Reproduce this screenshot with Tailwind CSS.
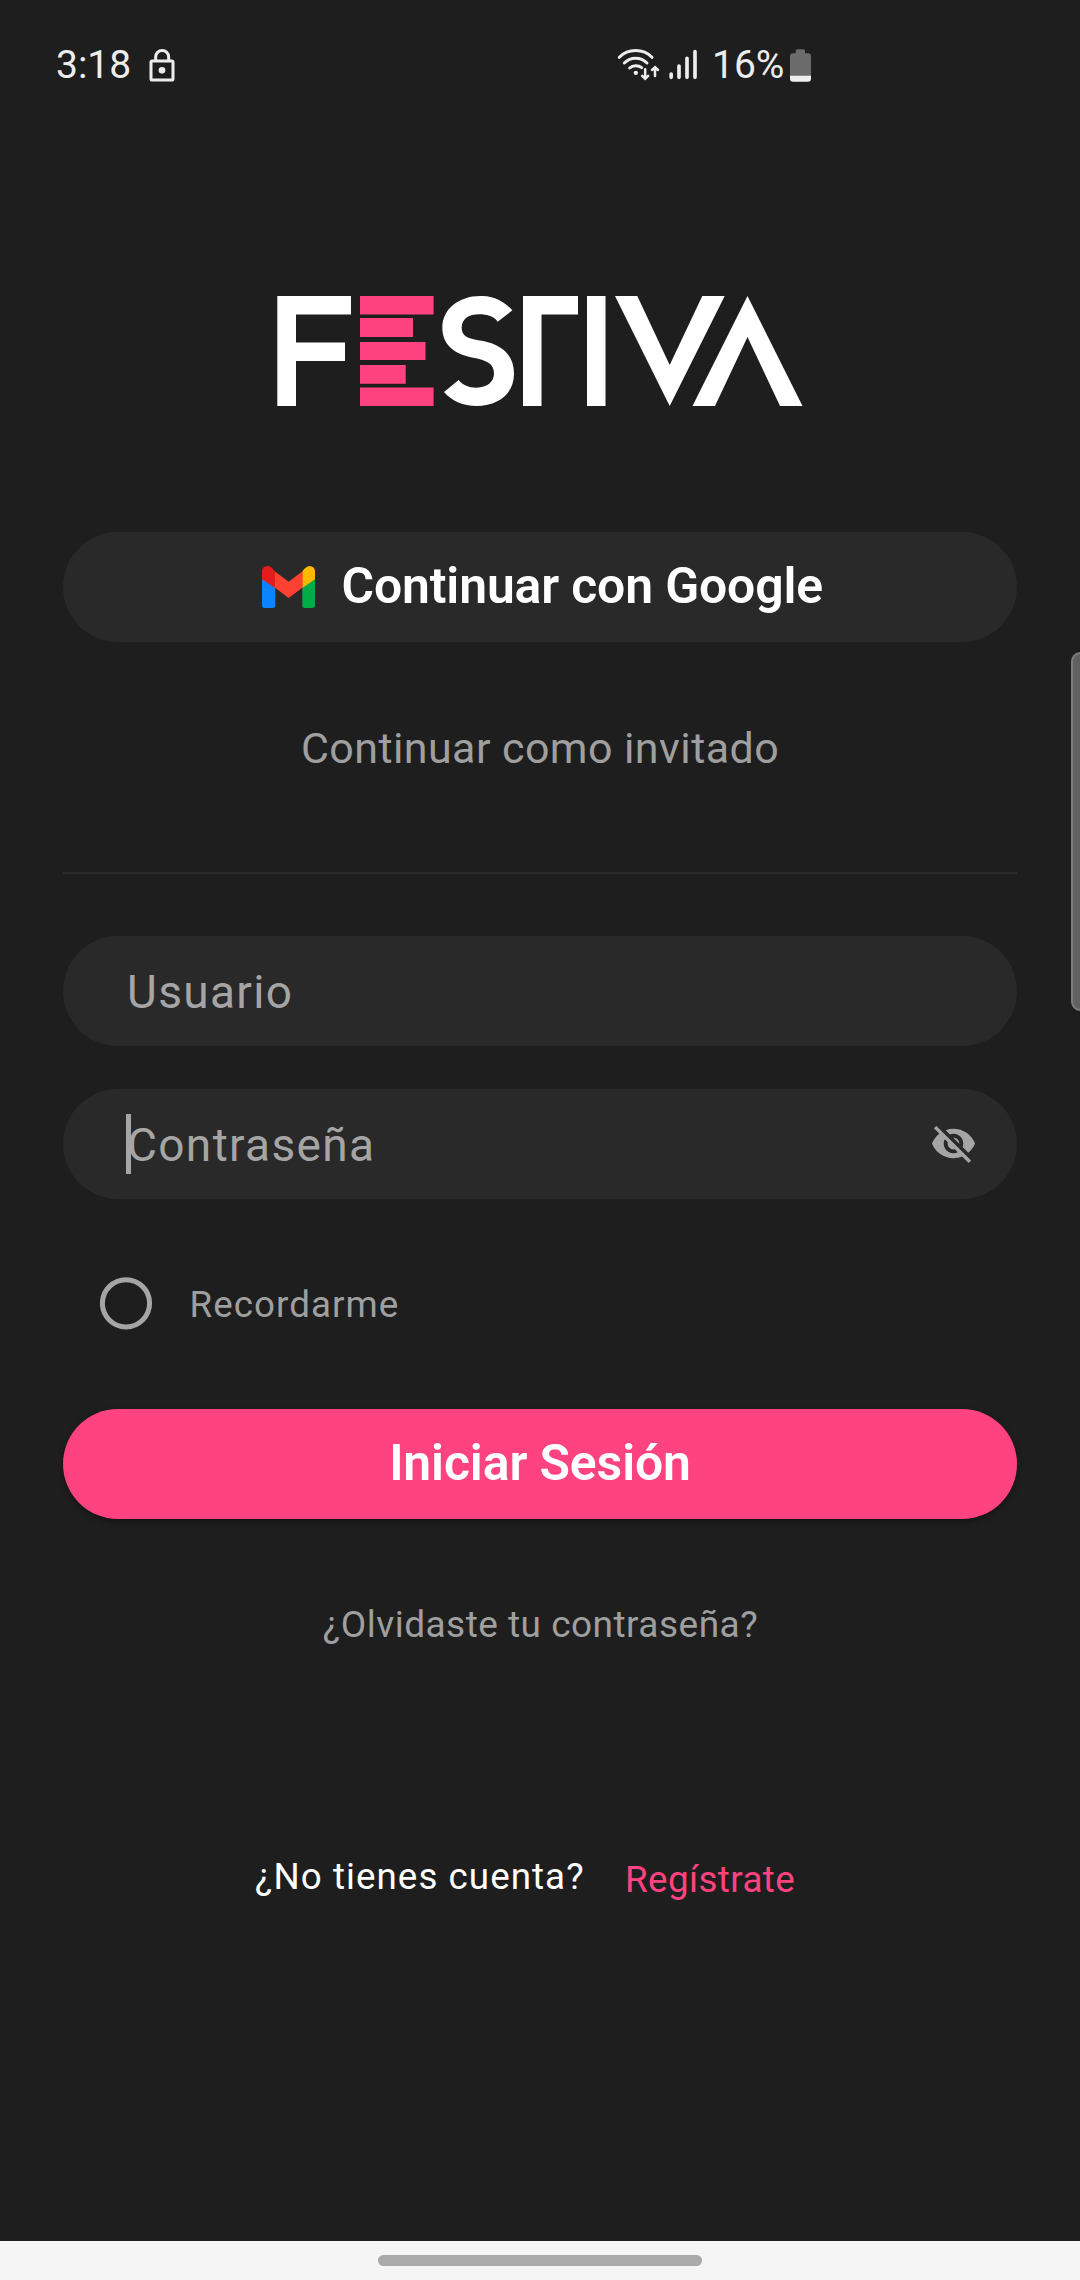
<!DOCTYPE html>
<html lang="es">
<head>
<meta charset="utf-8">
<title>Festiva</title>
<script src="https://cdn.jsdelivr.net/npm/@tailwindcss/browser@4"></script>
</head>
<body class="relative flex h-[2280px] w-[1080px] flex-col overflow-hidden bg-[#1e1e1e] font-[Roboto,sans-serif] whitespace-nowrap text-[#9f9f9f]">
  <!-- Status bar -->
  <header class="flex h-[128px] shrink-0 pt-[40px] text-[39px] leading-[50px] text-[#ededed]">
    <span class="ml-[56px] w-[93px]">3:18</span>
    <svg class="mt-[7.500px] h-[34px] w-[26px]" viewBox="328 53 78 102" fill="none" stroke="#ededed" stroke-width="9">
      <rect x="334" y="92" width="66" height="57" rx="4"/>
      <path d="M348 91V80a19.500 19.500 0 0 1 39 0v11"/>
      <circle cx="367" cy="120" r="10" fill="#ededed" stroke="none"/>
    </svg>
    <svg class="mt-[8px] ml-[442px] h-[34px] w-[82px]" viewBox="51 54 246 102" fill="none" stroke="#ededed" stroke-width="9" stroke-linecap="round">
      <path d="M58 82C84 55 130 55 156 82"/>
      <path d="M73 99C92 80 122 80 141 99"/>
      <path d="M89 114C99 105 115 105 125 113"/>
      <circle cx="107.500" cy="128.500" r="6.500" fill="#ededed" stroke="none"/>
      <path stroke-width="7.500" d="M135.500 118V145M126.500 137.500l9 8.500 9-8.500M165 138V112M156 120l9-8.500 9 8.500"/>
      <path stroke-width="11" d="M213.500 132V142M237 108V142M261 85V142M285 65V142"/>
    </svg>
    <span class="ml-[13px] w-[78px]">16%</span>
    <svg class="mt-[9px] h-[33px] w-[21px]" viewBox="570 58 63 98">
      <path fill="#6c6c6c" d="M587 70V63q0-5 5-5h18q5 0 5 5v7h9q9 0 9 9v60h-63V79q0-9 9-9z"/>
      <path fill="#f0f0f0" d="M570 138h63v9q0 9-9 9h-45q-9 0-9-9z"/>
    </svg>
  </header>

  <main class="flex grow flex-col px-[63px] pt-[168px]">
    <svg class="ml-[214px] h-[110px] w-[526px] shrink-0" viewBox="277 296 526 110" fill="#fff" role="img" aria-label="Festiva">
      <path d="M277.300 296H351v18.500h-55v28h49V361h-49v45h-18.700z"/>
      <path fill="#ff4280" d="M360 296h73.600v18.500H360zM360 318h53v19h-53zM360 342h65.500v18H360zM360 365h45.700v18.700H360zM360 387.500h73.600V406H360z"/>
      <path transform="translate(260 280) scale(.33333)" d="M757 91C730 62 700 47 662 48C595 48 547 88 547 143C547 192 580 222 640 233C682 241 702 252 702 280C702 306 682 323 649 323C625 323 607 314 596 300L552 336C576 363 610 378 649 378C717 378 762 340 762 281C762 228 730 196 670 183C625 176 605 170 605 143C605 116 628 103 657 103C683 103 702 109 713 125Z"/>
      <path d="M523 296h55v18.500h-36.500V406H523zM587 296h18.500v110H587zM615 296h22.300l32.400 69 32.600-69h22.400l-55 110zM747.500 296l55 110H780l-32.500-69-32.500 69h-22.500z"/>
    </svg>

    <button class="mt-[126px] flex h-[110px] shrink-0 items-center rounded-full bg-[#292929] pl-[199px] text-[49.875px] font-semibold tracking-[-0.14px] text-white">
      <svg class="h-[42px] w-[53px]" viewBox="666 138 159 126">
        <path fill="#0a84ff" d="M666 174l40 27v55q0 8-8 8h-22q-10 0-10-8z"/>
        <path fill="#00ac47" d="M825 174l-38 27v55q0 8 8 8h20q10 0 10-8z"/>
        <path fill="#ff4131" d="M703 153l43 32 43-32v49l-43 32-43-32z"/>
        <path fill="#e61c1c" d="M666 178v-26q2-13 17-14q9 0 21 15v50z"/>
        <path fill="#ffba00" d="M825 178v-26q-2-13-17-14q-7 0-20 14v51z"/>
      </svg>
      <span class="ml-[26.500px] pb-[2px]">Continuar con Google</span>
    </button>

    <a class="mt-[76px] text-center text-[43px] leading-[60px] tracking-[0.42px]">Continuar como invitado</a>

    <hr class="mt-[94px] h-[2px] border-0 bg-[#2a2a2a]">

    <div class="mt-[62px] flex h-[110px] shrink-0 items-center rounded-full bg-[#292929] pt-[3px] pl-[64px] text-[46px] tracking-[1.35px] text-[#a5a5a5]">Usuario</div>

    <div class="relative mt-[42.500px] flex h-[110.500px] shrink-0 items-center rounded-full bg-[#292929] pr-[40px] pl-[64px] text-[#a5a5a5]">
      <i class="absolute top-[25.500px] left-[63px] h-[60px] w-[5px] bg-[#a5a5a5]"></i>
      <span class="grow pt-[4px] text-[46px] tracking-[1.35px]">Contraseña</span>
      <svg class="h-[47px] w-[47px]" viewBox="0 0 24 24" fill="currentColor"><path d="M12 7c2.760 0 5 2.240 5 5 0 .650-.130 1.260-.360 1.830l2.920 2.920c1.510-1.260 2.700-2.890 3.430-4.750-1.730-4.390-6-7.500-11-7.500-1.400 0-2.740.250-3.980.700l2.160 2.160C10.740 7.130 11.350 7 12 7zM2 4.270l2.280 2.280.460.460C3.080 8.300 1.780 10.020 1 12c1.730 4.390 6 7.500 11 7.500 1.550 0 3.030-.300 4.380-.840l.420.420L19.730 22 21 20.730 3.270 3 2 4.270zM7.530 9.800l1.550 1.550c-.050.210-.080.430-.080.650 0 1.660 1.340 3 3 3 .220 0 .440-.030.650-.080l1.550 1.550c-.670.330-1.410.530-2.200.530-2.760 0-5-2.240-5-5 0-.790.200-1.530.530-2.200zm4.310-.780l3.150 3.150.020-.160c0-1.660-1.340-3-3-3l-.170.010z"/></svg>
    </div>

    <label class="mt-[78px] flex h-[53px] items-center pl-[37px]">
      <svg class="h-[53px] w-[53px]" viewBox="0 0 53 53"><circle cx="26" cy="26.300" r="23.600" fill="none" stroke="#a5a5a5" stroke-width="5"/></svg>
      <span class="ml-[36.500px] pt-[2px] text-[36.750px] leading-[50px] tracking-[1.05px]">Recordarme</span>
    </label>

    <button class="mt-[78.500px] flex h-[110.500px] shrink-0 items-center justify-center rounded-full bg-[#ff4280] text-[49.875px] font-semibold tracking-[-0.1px] text-white shadow-[0_3px_6px_rgba(0,0,0,0.35)]">Iniciar Sesión</button>

    <a class="mt-[81px] pl-px text-center text-[37px] leading-[50px] tracking-[0.48px]">¿Olvidaste tu contraseña?</a>

    <p class="mt-[202px] flex pl-[192px] text-[36.750px] leading-[50px]">
      <span class="w-[370px] tracking-[1.05px] text-white">¿No tienes cuenta?</span>
      <a class="pt-[3px] tracking-[0.4px] text-[#ff4280]">Regístrate</a>
    </p>
  </main>

  <!-- System navigation handle -->
  <footer class="flex h-[39px] shrink-0 justify-center bg-[#f5f5f5] pt-[14px]">
    <div class="h-[11px] w-[324px] rounded-full bg-[#aaaaaa]"></div>
  </footer>

  <!-- Edge panel handle -->
  <div class="absolute top-[652px] right-[-10px] h-[359px] w-[19px] rounded-[10px] border-2 border-[#7c7c7c] bg-[#616161]"></div>
</body>
</html>
